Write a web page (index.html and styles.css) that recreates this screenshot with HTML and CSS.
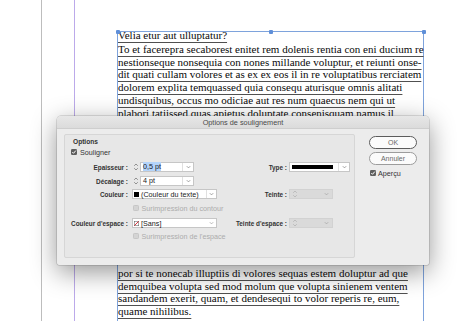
FILE: index.html
```html
<!DOCTYPE html>
<html lang="fr">
<head>
<meta charset="utf-8">
<title>Options de soulignement</title>
<link rel="stylesheet" href="styles.css">
</head>
<body>
<div class="stage">
  <div class="pasteboard"></div>
  <div class="page">
    <div class="guide">
      <div class="frame">
        <span class="handle h-tl"></span>
        <span class="handle h-tm"></span>
        <span class="handle h-tr"></span>
        <div class="story story-top">
          <p class="ln lead"><span>Velia etur aut ulluptatur?</span></p>
          <p class="ln"><span>To et facerepra secaborest enitet rem dolenis rentia con eni ducium re</span></p>
          <p class="ln"><span>nestionseque nonsequia con nones millande voluptur, et reiunti onse-</span></p>
          <p class="ln"><span>dit quati cullam volores et as ex ex eos il in re voluptatibus rerciatem</span></p>
          <p class="ln"><span>dolorem explita temquassed quia consequ aturisque omnis alitati</span></p>
          <p class="ln"><span>undisquibus, occus mo odiciae aut res num quaecus nem qui ut</span></p>
          <p class="ln"><span>plabori tatiissed quas apietus doluptate consenisquam namus il</span></p>
        </div>
        <div class="story story-bottom">
          <p class="ln"><span>por si te nonecab illuptiis di volores sequas estem doluptur ad que</span></p>
          <p class="ln"><span>demquibea volupta sed mod molum que volupta sinienem ventem</span></p>
          <p class="ln"><span>sandandem exerit, quam, et dendesequi to volor reperis re, eum,</span></p>
          <p class="ln"><span>quame nihilibus.</span></p>
        </div>
      </div>
    </div>
  </div>

  <div class="dialog">
    <div class="titlebar">Options de soulignement</div>
    <div class="dbody">
      <div class="panel">
        <div class="grp-title">Options</div>
        <div class="check-row">
          <span class="cb on"><svg viewBox="0 0 6 6" width="6" height="6"><path d="M1.3 3.1 2.5 4.3 4.8 1.6" fill="none" stroke="#fff" stroke-width="1"/></svg></span>
          <span class="ctext">Souligner</span>
        </div>

        <div class="row r-ep">
          <span class="lbl">Epaisseur :</span>
          <div class="num">
            <svg class="spin" viewBox="0 0 6 10" width="6" height="10"><path d="M1.2 3.8 3 2 4.8 3.8M1.2 6.2 3 8 4.8 6.2" fill="none" stroke="#7a7a7a" stroke-width=".8"/></svg>
            <div class="numbox"><span class="val"><span class="hl">0,5 pt</span></span><span class="drop"><svg viewBox="0 0 5 4" width="5" height="4"><path d="M.8 1.2 2.5 2.9 4.2 1.2" fill="none" stroke="#8a8a8a" stroke-width=".8"/></svg></span></div>
          </div>
          <span class="lbl lbl2">Type :</span>
          <div class="typesel"><span class="stroke"></span><span class="drop"><svg viewBox="0 0 5 4" width="5" height="4"><path d="M.8 1.2 2.5 2.9 4.2 1.2" fill="none" stroke="#8a8a8a" stroke-width=".8"/></svg></span></div>
        </div>

        <div class="row r-de">
          <span class="lbl">Décalage :</span>
          <div class="num">
            <svg class="spin" viewBox="0 0 6 10" width="6" height="10"><path d="M1.2 3.8 3 2 4.8 3.8M1.2 6.2 3 8 4.8 6.2" fill="none" stroke="#7a7a7a" stroke-width=".8"/></svg>
            <div class="numbox"><span class="val">4 pt</span><span class="drop"><svg viewBox="0 0 5 4" width="5" height="4"><path d="M.8 1.2 2.5 2.9 4.2 1.2" fill="none" stroke="#8a8a8a" stroke-width=".8"/></svg></span></div>
          </div>
        </div>

        <div class="row r-co">
          <span class="lbl">Couleur :</span>
          <div class="colorsel">
            <span class="swatch black"></span>
            <span class="ctxt">(Couleur du texte)</span>
            <span class="drop"><svg viewBox="0 0 5 4" width="5" height="4"><path d="M.8 1.2 2.5 2.9 4.2 1.2" fill="none" stroke="#8a8a8a" stroke-width=".8"/></svg></span>
          </div>
          <span class="lbl lbl2">Teinte :</span>
          <div class="disbox">
            <svg viewBox="0 0 6 10" width="6" height="10"><path d="M1.2 3.8 3 2 4.8 3.8M1.2 6.2 3 8 4.8 6.2" fill="none" stroke="#b4b4b4" stroke-width=".8"/></svg>
            <svg viewBox="0 0 5 4" width="5" height="4"><path d="M.8 1.2 2.5 2.9 4.2 1.2" fill="none" stroke="#a8a8a8" stroke-width=".8"/></svg>
          </div>
        </div>

        <div class="row r-s1">
          <div class="dischk"><span class="cb off"></span><span>Surimpression du contour</span></div>
        </div>

        <div class="row r-ce">
          <span class="lbl">Couleur d'espace :</span>
          <div class="colorsel">
            <svg class="swatch" viewBox="0 0 5 5" width="5" height="5"><rect x=".25" y=".25" width="4.5" height="4.5" fill="#fff" stroke="#555" stroke-width=".5"/><path d="M.4 4.6 4.6 .4" stroke="#d8222c" stroke-width=".9"/></svg>
            <span class="ctxt">[Sans]</span>
            <span class="drop nodiv"><svg viewBox="0 0 5 4" width="5" height="4"><path d="M.8 1.2 2.5 2.9 4.2 1.2" fill="none" stroke="#a8a8a8" stroke-width=".8"/></svg></span>
          </div>
          <span class="lbl lbl2">Teinte d'espace :</span>
          <div class="disbox">
            <svg viewBox="0 0 6 10" width="6" height="10"><path d="M1.2 3.8 3 2 4.8 3.8M1.2 6.2 3 8 4.8 6.2" fill="none" stroke="#b4b4b4" stroke-width=".8"/></svg>
            <svg viewBox="0 0 5 4" width="5" height="4"><path d="M.8 1.2 2.5 2.9 4.2 1.2" fill="none" stroke="#a8a8a8" stroke-width=".8"/></svg>
          </div>
        </div>

        <div class="row r-s2">
          <div class="dischk"><span class="cb off"></span><span>Surimpression de l'espace</span></div>
        </div>
      </div>

      <div class="buttons">
        <div class="btn default">OK</div>
        <div class="btn cancel">Annuler</div>
        <div class="apercu">
          <span class="cb on"><svg viewBox="0 0 6 6" width="6" height="6"><path d="M1.3 3.1 2.5 4.3 4.8 1.6" fill="none" stroke="#fff" stroke-width="1"/></svg></span>
          <span>Aperçu</span>
        </div>
      </div>
    </div>
  </div>
</div>
</body>
</html>
```

FILE: styles.css
```css
* { box-sizing: border-box; margin: 0; padding: 0; }
html, body { margin: 0; background: #fff; }

.stage {
  position: relative;
  width: 474px;
  height: 321px;
  overflow: hidden;
  display: flex;
  background: #fff;
}
.pasteboard { width: 41px; flex: none; }
.page {
  flex: 1;
  display: flex;
  border-left: 1px solid #bdbdbd;
  padding-left: 32px;
}
.guide {
  flex: 1;
  border-left: 1px solid #bcaaea;
  padding-left: 42px;
  padding-top: 31px;
}
.frame {
  position: relative;
  width: 307px;
  height: 100%;
  border: 1px solid #7ea3dc;
  border-bottom: none;
  font-family: "Liberation Serif", "Times New Roman", serif;
  font-size: 11px;
  line-height: 12.7px;
  color: #0a0a0a;
}
.handle {
  position: absolute;
  top: -2.5px;
  width: 4px;
  height: 4px;
  background: #5f8fd8;
  border-radius: 1px;
}
.h-tl { left: -2.5px; }
.h-tm { left: 151px; }
.h-tr { right: -2.5px; }

.ln { white-space: nowrap; }
.ln span {
  text-decoration: underline;
  text-decoration-color: #505050;
  text-decoration-thickness: 1px;
  text-underline-offset: 3px;
}
.story-top { margin-top: -3.5px; }
.lead { margin-bottom: 1.8px; }
.story-bottom { margin-top: 147.8px; }

/* dialog */
.dialog {
  position: absolute;
  left: 57px;
  top: 116px;
  width: 372px;
  height: 149px;
  background: #ececec;
  border-radius: 4px 4px 2px 2px;
  box-shadow: 0 7px 26px rgba(0,0,0,.42), 0 0 0 .5px rgba(0,0,0,.22);
  font-family: "Liberation Sans", Arial, sans-serif;
  display: flex;
  flex-direction: column;
}
.titlebar {
  height: 13px;
  background: linear-gradient(#e7e7e7, #dbdbdb);
  border-bottom: 1px solid #cecece;
  border-radius: 4px 4px 0 0;
  text-align: center;
  font-size: 7.3px;
  line-height: 13px;
  color: #4a4a4a;
}
.dbody {
  flex: 1;
  display: flex;
  padding: 5px 12px 7px 7px;
}
.panel {
  width: 291px;
  border: 1px solid #d6d6d6;
  background: #e7e7e7;
  border-radius: 2px;
  padding-top: 2px;
  display: flex;
  flex-direction: column;
}
.grp-title {
  height: 10px;
  padding-left: 8px;
  font-weight: bold;
  font-size: 6.6px;
  line-height: 10px;
  color: #333;
}
.check-row {
  height: 10px;
  padding-left: 6px;
  display: flex;
  align-items: center;
  gap: 3px;
  font-size: 7.2px;
  color: #333;
}
.cb {
  width: 6px;
  height: 6px;
  flex: none;
  border-radius: 1.3px;
  display: flex;
}
.cb.on { background: #5e5e5e; }
.cb.off { background: #d4d4d4; border: .5px solid #c6c6c6; }

.row {
  display: grid;
  grid-template-columns: 67px 85px 72px 61px;
  align-items: center;
  height: 10px;
}
.r-ep { margin-top: 5px; }
.r-de { margin-top: 4px; }
.r-co { margin-top: 3px; }
.r-s1 { margin-top: 4px; }
.r-ce { margin-top: 5px; }
.r-s2 { margin-top: 3px; }

.lbl {
  text-align: right;
  padding-right: 4px;
  font-weight: bold;
  font-size: 6.4px;
  color: #333;
  white-space: nowrap;
}
.lbl2 { padding-right: 2px; }

.num { display: flex; align-items: center; height: 10px; }
.spin { margin-left: 1px; margin-right: 1px; flex: none; }
.numbox {
  width: 54px;
  height: 10px;
  background: #fff;
  border: 1px solid #c6c6c6;
  display: flex;
}
.val {
  flex: 1;
  padding-left: 2px;
  font-size: 7.2px;
  line-height: 8px;
  color: #1a1a1a;
}
.hl { background: #b4d4fa; }
.drop {
  width: 11px;
  flex: none;
  border-left: 1px solid #e0e0e0;
  display: flex;
  align-items: center;
  justify-content: center;
}
.drop.nodiv { border-left-color: transparent; }

.typesel {
  width: 61px;
  height: 10px;
  background: #fff;
  border: 1px solid #c6c6c6;
  display: flex;
  align-items: center;
}
.stroke {
  width: 41px;
  height: 4px;
  margin-left: 2px;
  margin-right: 5px;
  background: #000;
}
.typesel .drop { height: 100%; }

.colorsel {
  width: 85px;
  height: 10px;
  background: #fff;
  border: 1px solid #c6c6c6;
  display: flex;
  align-items: center;
}
.swatch { width: 5px; height: 5px; margin-left: 1px; flex: none; }
.swatch.black { background: #000; }
.ctxt {
  flex: 1;
  padding-left: 2px;
  font-size: 7.2px;
  color: #1a1a1a;
  white-space: nowrap;
}
.colorsel .drop { height: 100%; width: 10px; }

.disbox {
  width: 44px;
  height: 10px;
  background: #dadada;
  border: 1px solid #d2d2d2;
  display: flex;
  align-items: center;
  justify-content: space-between;
  padding: 0 3px 0 2px;
}

.dischk {
  grid-column: 2 / 5;
  display: flex;
  align-items: center;
  gap: 2.5px;
  padding-left: 1px;
  font-size: 7.2px;
  color: #acacac;
  white-space: nowrap;
}

.buttons {
  margin-left: 14px;
  width: 48px;
  padding-top: 2px;
  display: flex;
  flex-direction: column;
}
.btn {
  height: 13px;
  border-radius: 7px;
  background: #fbfbfb;
  border: 1px solid #9c9c9c;
  font-size: 7px;
  color: #6a6a6a;
  display: flex;
  align-items: center;
  justify-content: center;
}
.btn.default { border: 1.5px solid #5c5c5c; }
.btn.cancel { margin-top: 3px; }
.apercu {
  margin-top: 4px;
  height: 8px;
  display: flex;
  align-items: center;
  gap: 2px;
  padding-left: 1px;
  font-size: 7.2px;
  color: #333;
}
```
